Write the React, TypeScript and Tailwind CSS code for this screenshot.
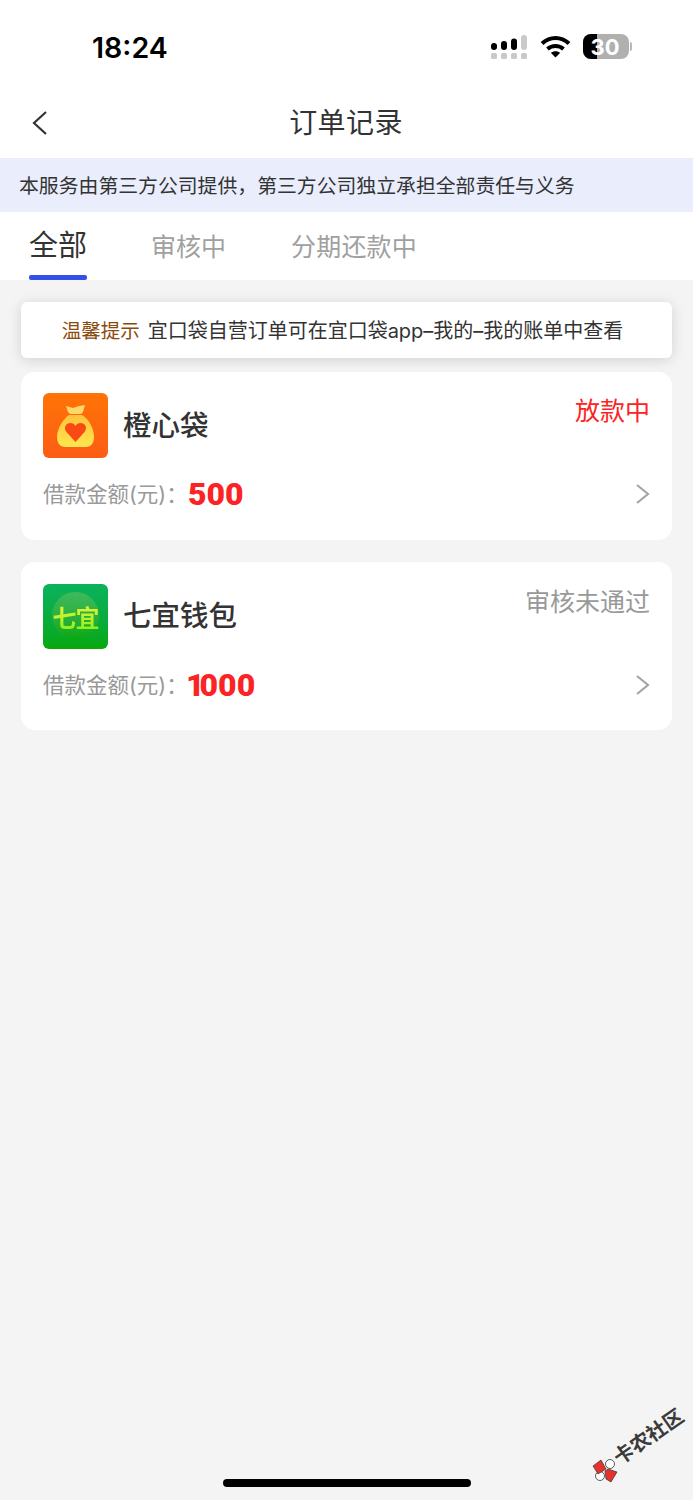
import React from "react";

const cjk = "font-['Inter','Noto_Sans_CJK_SC',sans-serif]";

const orders = [
  { id: "cx", name: "橙心袋", amount: "500", status: "放款中", statusClass: "text-[#fb2323]", logo: "orange", top: "pt-[21px]", nameClass: "pt-[1px]" },
  { id: "qy", name: "七宜钱包", amount: "000", lead: "1", status: "审核未通过", statusClass: "text-[#999999]", logo: "green", top: "pt-[22px]", nameClass: "pb-[2px]" },
];

function StatusIcons() {
  return (
    <div className="flex items-center">
      <svg width="36" height="24" viewBox="0 0 36 24">
        <rect x="0" y="8" width="6" height="7" rx="3" fill="#000" />
        <rect x="10" y="6" width="6" height="9" rx="3" fill="#000" />
        <rect x="20" y="3.5" width="6" height="11.5" rx="3" fill="#000" />
        <rect x="30" y="0" width="6" height="15" rx="3" fill="#c9c9c9" />
        <rect x="0" y="18" width="6" height="6" rx="1.5" fill="#c9c9c9" />
        <rect x="10" y="18" width="6" height="6" rx="1.5" fill="#c9c9c9" />
        <rect x="20" y="18" width="6" height="6" rx="1.5" fill="#c9c9c9" />
        <rect x="30" y="18" width="6" height="6" rx="1.5" fill="#c9c9c9" />
      </svg>
      <svg className="ml-[13px]" width="31" height="23" viewBox="0 0 31 23" fill="none" stroke="#000" strokeWidth="4">
        <path d="M2 8.5C10 1 21 1 29 8.5" />
        <path d="M7.5 14C12 10 19 10 23.5 14" />
        <path d="M15.5 22.5L10.8 17.7C13.5 15.6 17.5 15.6 20.2 17.7Z" fill="#000" stroke="none" />
      </svg>
      <div className="flex items-center gap-[1px] ml-[12px]">
        <div className="relative w-[46px] h-[25px] rounded-[8px] bg-[#b0b0b0] overflow-hidden flex items-center justify-center">
          <div className="absolute left-0 top-0 h-full w-[14px] bg-black" />
          <span className="relative font-['Inter',sans-serif] text-[22px] leading-none font-bold text-white -ml-[2px]">30</span>
        </div>
        <div className="w-[2px] h-[9px] rounded-r bg-[#b8b8b8]" />
      </div>
    </div>
  );
}

function BagLogo() {
  return (
    <div className="w-[65px] h-[65px] rounded-[6px] bg-gradient-to-b from-[#ff7404] to-[#fc5c14] shrink-0">
      <svg width="65" height="65" viewBox="0 0 65 65">
        <defs>
          <linearGradient id="bag" x1="0" y1="0" x2="0" y2="1">
            <stop offset="0" stopColor="#ffc23c" />
            <stop offset="1" stopColor="#ffe650" />
          </linearGradient>
        </defs>
        <path d="M23 13L30 15L36 13L42 12L40 19L38 21H27L25 19Z" fill="#ffd768" />
        <path d="M26 22H39C46 26 51 36 51 44C51 50 48 54 43 54H22C17 54 14 50 14 44C14 36 20 26 26 22Z" fill="url(#bag)" />
        <path d="M32.5 49L23.5 39C20 34.5 23 30 27.5 30C29.8 30 31.5 31.2 32.5 33C33.5 31.2 35.2 30 37.5 30C42 30 45 34.5 41.5 39Z" fill="#fa4a14" />
      </svg>
    </div>
  );
}

function WalletLogo() {
  return (
    <div className="relative w-[65px] h-[65px] rounded-[6px] bg-gradient-to-b from-[#0cb25c] to-[#08a805] shrink-0 overflow-hidden flex items-center justify-center">
      <div className="absolute left-[9px] top-[8px] w-[47px] h-[47px] rounded-full bg-gradient-to-b from-[#3fb95c] to-[#0aa80f]" />
      <span className="relative font-['Noto_Sans_CJK_SC',sans-serif] text-[24px] leading-none font-bold tracking-[-1px] bg-gradient-to-b from-[#e4f23a] to-[#8ef01e] bg-clip-text text-transparent">七宜</span>
    </div>
  );
}

function Watermark() {
  return (
    <>
      <svg className="absolute left-[588px] top-[1450px]" width="36" height="36" viewBox="0 0 36 36">
        <circle cx="22" cy="14" r="4.5" fill="#fff" stroke="#333" strokeWidth="0.8" />
        <circle cx="12" cy="26" r="4.5" fill="#fff" stroke="#333" strokeWidth="0.8" />
        <path d="M5 16L13 10L18 19L10 24Z" fill="#e5322a" stroke="#333" strokeWidth="0.7" />
        <path d="M17 21L20 19L29 22L23 32L18 29Z" fill="#e5322a" stroke="#333" strokeWidth="0.7" />
      </svg>
      <span className="absolute left-[608px] top-[1426px] w-[80px] -rotate-[35deg] text-center font-['Noto_Sans_CJK_SC',sans-serif] text-[20px] leading-[20px] font-bold text-[#3a3a3a] whitespace-nowrap">卡农社区</span>
    </>
  );
}

export default function App() {
  return (
    <div className={`relative w-[693px] h-[1500px] overflow-hidden bg-[#f4f4f4] flex flex-col ${cjk}`}>
      {/* status bar */}
      <div className="bg-white h-[92px] shrink-0 flex items-start justify-between pt-[32px] pl-[92px] pr-[61px]">
        <span className="font-['Inter',sans-serif] text-[28.5px] leading-[32px] font-semibold text-black">18:24</span>
        <div className="pt-[2px]">
          <StatusIcons />
        </div>
      </div>

      {/* nav */}
      <div className="relative bg-white h-[66px] shrink-0 flex items-center justify-center pb-[4px]">
        <svg className="absolute left-[31px] top-[18px]" width="18" height="26" viewBox="0 0 18 26" fill="none" stroke="#333" strokeWidth="2.2">
          <path d="M15 2L3 13L15 24" />
        </svg>
        <span className="text-[28px] leading-[40px] text-[#333333] tracking-[0.4px] -ml-[1px]">订单记录</span>
      </div>

      {/* notice */}
      <div className="bg-[#e9edfc] h-[54px] shrink-0 flex items-center pl-[19px] pt-[2px]">
        <span className="text-[19.85px] leading-[28px] text-[#333333] whitespace-nowrap">本服务由第三方公司提供，第三方公司独立承担全部责任与义务</span>
      </div>

      {/* tabs */}
      <div className="bg-white h-[68px] shrink-0 flex items-start pl-[29px]">
        <div className="h-full flex flex-col items-center justify-between w-[58px]">
          <span className="text-[29px] leading-[68px] h-[60px] text-[#333333]">全部</span>
          <div className="w-[58px] h-[5px] rounded-[2px] bg-[#3350e8]" />
        </div>
        <span className="ml-[64px] text-[25px] leading-[70px] text-[#a0a0a0]">审核中</span>
        <span className="ml-[65px] text-[25px] leading-[70px] text-[#a0a0a0] tracking-[0.2px]">分期还款中</span>
      </div>

      <div className="flex flex-col px-[21px] pt-[22px]">
        {/* tip */}
        <div className="h-[56px] w-[651px] rounded-[6px] bg-white shadow-[0_2px_14px_rgba(0,0,0,0.14)] flex items-center justify-center pt-[2px] pr-[8px]">
          <span className="text-[19.5px] leading-[28px] text-[#8a4a0c] whitespace-nowrap">温馨提示</span>
          <span className="ml-[8px] text-[20px] leading-[28px] text-[#333333] whitespace-nowrap">宜口袋自营订单可在宜口袋app–我的–我的账单中查看</span>
        </div>

        <div className="mt-[14px] flex flex-col gap-[22px]">
          {orders.map((o) => (
            <div key={o.id} className={`h-[168px] w-[651px] rounded-[14px] bg-white flex flex-col pl-[22px] pr-[22px] ${o.top}`}>
              <div className="flex items-start justify-between h-[65px]">
                <div className="flex items-center gap-[15px]">
                  {o.logo === "orange" ? <BagLogo /> : <WalletLogo />}
                  <span className={`text-[28.5px] leading-[40px] font-medium text-[#333333] ${o.nameClass}`}>{o.name}</span>
                </div>
                <span className={`text-[25px] leading-[36px] ${o.statusClass}`}>{o.status}</span>
              </div>
              <div className="mt-[20px] flex items-center justify-between h-[32px]">
                <div className="flex items-center">
                  <span className="text-[21.5px] leading-[32px] text-[#999999] w-[145px] whitespace-nowrap">借款金额(元)：</span>
                  <span className="font-['Roboto',sans-serif] text-[32px] leading-[32px] font-black text-[#fb2323]">
                    {o.lead && <span className="tracking-[-5px] -ml-[2px]">{o.lead}</span>}
                    {o.amount}
                  </span>
                </div>
                <svg className="-mr-[1px]" width="16" height="22" viewBox="0 0 16 22" fill="none" stroke="#a5a5a5" strokeWidth="2.2">
                  <path d="M2 2L13 11L2 20" />
                </svg>
              </div>
            </div>
          ))}
        </div>
      </div>

      {/* home indicator */}
      <div className="absolute left-[223px] top-[1479px] w-[248px] h-[8px] rounded-full bg-black" />
      <Watermark />
    </div>
  );
}
